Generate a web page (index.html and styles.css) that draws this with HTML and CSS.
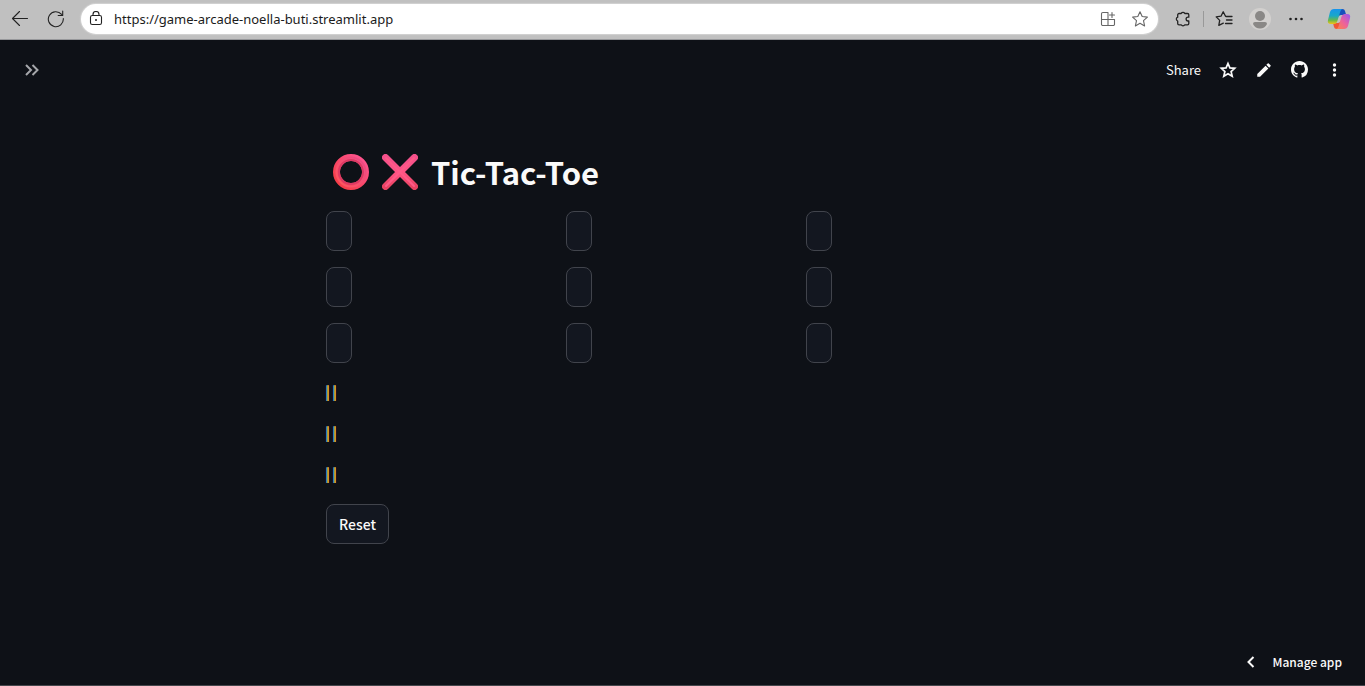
FILE: index.html
```html
<!DOCTYPE html>
<html lang="en">
<head>
<meta charset="utf-8">
<title>Tic-Tac-Toe</title>
<link rel="stylesheet" href="styles.css">
</head>
<body>
<div class="browser">
  <button class="icon-btn nav-btn" aria-label="Back"><svg width="18" height="18" viewBox="0 0 18 18"><path class="thin" d="M16.500 8.500H1.500M8.500 1.500l-7 7 7 7"/></svg></button>
  <button class="icon-btn nav-btn" aria-label="Reload"><svg width="18" height="18" viewBox="0 0 18 18"><path class="thin" d="M16.3 8.5A7.5 7.5 0 1 1 14.6 4.4M15.7 1v4.5h-4.5"/></svg></button>
  <div class="address">
    <svg width="14" height="16" viewBox="0 0 14 16"><rect class="thin" x="1.5" y="4.5" width="11" height="9" rx="1.8"/><path class="thin" d="M4 4.500V3.500a3 3 0 0 1 6 0v1"/><circle cx="7" cy="9" r="1"/></svg>
    <input class="url" type="text" aria-label="Address" value="https://game-arcade-noella-buti.streamlit.app">
    <button class="icon-btn muted" aria-label="Install app"><svg width="16" height="16" viewBox="0 0 16 16"><path class="thin" d="M8 1.5H2.8A1.3 1.3 0 0 0 1.500 2.800V13.200A1.3 1.300 0 0 0 2.800 14.500H13.200A1.300 1.300 0 0 0 14.500 13.200V8.500H1.500M8 1.500V14.500M12 1.500V6.500M9.500 4H14.500"/></svg></button>
    <button class="icon-btn muted" aria-label="Add favorite"><svg width="18" height="18" viewBox="0 0 18 18"><path class="thin" d="M9 1.700l2.200 4.800 5.200.6-3.900 3.600 1.100 5.200L9 13.300l-4.600 2.600 1.100-5.200L1.600 7.100l5.200-.6z"/></svg></button>
  </div>
  <div class="tools">
    <button class="icon-btn" aria-label="Extensions"><svg width="18" height="18" viewBox="0 0 18 18"><path class="tool" d="M5 3.500H7.200a2 2 0 0 1 3.600 0H13.500a1.300 1.300 0 0 1 1.300 1.300V7.200h-.8a1.900 1.900 0 0 0 0 3.800h.8v2.500a1.300 1.300 0 0 1-1.300 1.300H10.800a2 2 0 0 1-3.600 0H5a1.300 1.300 0 0 1-1.300-1.300V11a2 2 0 0 1 0-3.800V4.800A1.300 1.300 0 0 1 5 3.500z"/></svg></button>
    <span class="divider"></span>
    <button class="icon-btn" aria-label="Favorites"><svg width="18" height="18" viewBox="0 0 18 18"><path class="tool" d="M10.500 6.200L8.200 1.800 6 6.200l-4.800.7 3.500 3.500-.9 5 4.500-2.300M11 6.500h6M11.500 10h5.500M10.500 13.500h6.500"/></svg></button>
    <button class="icon-btn avatar" aria-label="Profile"><svg width="22" height="22" viewBox="0 0 22 22"><circle cx="11" cy="11" r="11" fill="#d2d0ce"/><circle cx="11" cy="8" r="5" fill="#8a8886"/><path d="M4 16q0-2 2-2h10q2 0 2 2c-1.500 3-4 4.500-7 4.500S5.500 19 4 16z" fill="#8a8886"/></svg></button>
    <button class="icon-btn more" aria-label="Settings and more"><svg width="16" height="16" viewBox="0 0 16 16"><circle cx="2.500" cy="8" r="1.300"/><circle cx="8" cy="8" r="1.300"/><circle cx="13.500" cy="8" r="1.300"/></svg></button>
    <button class="icon-btn" aria-label="Copilot"><svg width="24" height="22" viewBox="0 0 24 22">
      <defs>
        <linearGradient id="cool" x1="0" y1="0" x2="0" y2="1"><stop offset="0" stop-color="#1794ed"/><stop offset=".45" stop-color="#19a8c8"/><stop offset=".75" stop-color="#68b84a"/><stop offset="1" stop-color="#f4c318"/></linearGradient>
        <linearGradient id="warm" x1="1" y1="0" x2="0" y2="1"><stop offset="0" stop-color="#9657f2"/><stop offset=".5" stop-color="#ed629b"/><stop offset="1" stop-color="#ff873f"/></linearGradient>
      </defs>
      <path d="M12 1h3.500q2 0 2.500 2l1.200 4H14q-2 0-2.500 2z" fill="#174fbc"/>
      <path d="M12 21H9.500q-2 0-2.500-2L6 15h5q2 0 2.500-2z" fill="#ef5635"/>
      <path d="M7 1h9q-2 0-2.500 2l-3.300 10.500Q9.500 16 7 16H4q-4 0-3-4L3 4q1-3 4-3z" fill="url(#cool)"/>
      <path d="M17 21H8.500q2.200 0 3-2.500l3-10Q15.300 6 17.500 6H20q4 0 3 4l-2 8q-1 3-4 3z" fill="url(#warm)"/>
    </svg></button>
  </div>
</div>

<div class="app">
  <header class="toolbar">
    <button class="icon-btn expand" aria-label="Open sidebar"><svg width="16" height="14" viewBox="0 0 16 14"><path d="M2 2l5 5-5 5M8.500 2l5 5-5 5"/></svg></button>
    <div class="actions">
      <button class="share">Share</button>
      <button class="icon-btn" aria-label="Star"><svg width="18" height="18" viewBox="0 0 18 18"><path class="outline" d="M9 2.500l1.900 4.400 4.800.4-3.600 3.200 1.100 4.700L9 12.700l-4.200 2.500 1.100-4.700-3.600-3.200 4.800-.4z"/></svg></button>
      <button class="icon-btn" aria-label="Edit"><svg width="18" height="18" viewBox="0 0 24 24"><path d="M3 17.250V21h3.750L17.810 9.940l-3.750-3.750L3 17.250zM20.710 7.040a1 1 0 0 0 0-1.410l-2.340-2.340a1 1 0 0 0-1.410 0l-1.830 1.830 3.750 3.750 1.830-1.830z"/></svg></button>
      <button class="icon-btn" aria-label="View on GitHub"><svg width="17" height="17" viewBox="0 0 16 16"><path d="M8 0C3.580 0 0 3.580 0 8c0 3.540 2.290 6.530 5.470 7.590.4.070.55-.17.55-.38 0-.19-.01-.82-.01-1.490-2.010.37-2.530-.49-2.690-.94-.09-.23-.48-.94-.82-1.130-.28-.15-.68-.52-.01-.53.63-.01 1.080.58 1.230.82.72 1.210 1.870.87 2.330.66.07-.52.28-.87.51-1.070-1.780-.2-3.640-.89-3.640-3.950 0-.87.31-1.590.82-2.150-.08-.2-.36-1.020.08-2.120 0 0 .67-.21 2.200.82.64-.18 1.320-.27 2-.27s1.360.09 2 .27c1.530-1.040 2.200-.82 2.200-.82.44 1.100.16 1.920.08 2.120.51.56.82 1.270.82 2.150 0 3.070-1.870 3.750-3.650 3.950.29.25.54.73.54 1.480 0 1.070-.01 1.930-.01 2.200 0 .21.15.46.55.38A8 8 0 0 0 16 8c0-4.420-3.580-8-8-8z"/></svg></button>
      <button class="icon-btn" aria-label="Menu"><svg width="17" height="18" viewBox="0 0 17 18"><circle cx="8.500" cy="4" r="1.700"/><circle cx="8.500" cy="9" r="1.700"/><circle cx="8.500" cy="14" r="1.700"/></svg></button>
    </div>
  </header>

  <main class="content">
    <h1 class="title">
      <svg width="36" height="36" viewBox="0 0 36 36" role="img" aria-label="Circle">
        <defs><linearGradient id="ring" x1="1" y1="0" x2="0" y2="1"><stop offset="0" stop-color="#ff5593"/><stop offset="1" stop-color="#f53b42"/></linearGradient><linearGradient id="ringin" x1="1" y1="0" x2="0" y2="1"><stop offset="0" stop-color="#e94888"/><stop offset="1" stop-color="#ff575d"/></linearGradient></defs>
        <circle cx="18" cy="18" r="14.500" fill="none" stroke="url(#ring)" stroke-width="7"/><circle cx="18" cy="18" r="12" fill="none" stroke="#dc3a64" stroke-width="2"/><circle cx="18" cy="18" r="14.500" fill="none" stroke="url(#ringin)" stroke-width="2"/>
      </svg>
      <svg width="36" height="36" viewBox="0 0 36 36" role="img" aria-label="Cross">
        <defs><linearGradient id="cross" x1="0" y1="0" x2="0" y2="1"><stop offset="0" stop-color="#f4508b"/><stop offset=".5" stop-color="#ff5585"/><stop offset="1" stop-color="#ea4362"/></linearGradient></defs>
        <path d="M3.500 3.500l29 29M32.500 3.500l-29 29" stroke="url(#cross)" stroke-width="7" stroke-linecap="round"/><path d="M4 4l28 28M32 4L4 32" stroke="#ff5a88" stroke-width="2" stroke-linecap="round"/>
      </svg>
      <span>Tic-Tac-Toe</span>
    </h1>
    <div class="board">
      <button class="cell" aria-label="Row 1, column 1"></button><button class="cell" aria-label="Row 1, column 2"></button><button class="cell" aria-label="Row 1, column 3"></button>
      <button class="cell" aria-label="Row 2, column 1"></button><button class="cell" aria-label="Row 2, column 2"></button><button class="cell" aria-label="Row 2, column 3"></button>
      <button class="cell" aria-label="Row 3, column 1"></button><button class="cell" aria-label="Row 3, column 2"></button><button class="cell" aria-label="Row 3, column 3"></button>
    </div>
    <div class="moves">
      <p class="row-text">| |</p>
      <p class="row-text">| |</p>
      <p class="row-text">| |</p>
    </div>
    <button class="reset">Reset</button>
  </main>

  <footer class="footer">
    <button class="manage"><svg width="8" height="12" viewBox="0 0 8 12"><path d="M6.500 1L1.500 6l5 5"/></svg>Manage app</button>
  </footer>
</div>
</body>
</html>
```
FILE: styles.css
```css
* { box-sizing: border-box; }
body {
  margin: 0;
  min-height: 100vh;
  display: flex;
  flex-direction: column;
  background: #0e1117;
  color: #fafafa;
  font-family: "Noto Sans CJK SC", "Noto Sans", sans-serif;
}
button {
  margin: 0;
  padding: 0;
  border: 0;
  background: none;
  color: inherit;
  font: inherit;
  cursor: pointer;
}
svg { display: block; flex: none; fill: currentColor; }
.icon-btn { display: flex; align-items: center; justify-content: center; }
.thin, .tool, .outline {
  fill: none;
  stroke: currentColor;
  stroke-linejoin: round;
  stroke-linecap: round;
}
.thin { stroke-width: 1.1; }
.tool { stroke-width: 1.3; }
.outline { stroke-width: 1.7; stroke-linejoin: miter; }

.browser {
  display: flex;
  align-items: center;
  height: 40px;
  padding: 0 14px 2px 11px;
  background: #c0c0c0;
  border-bottom: 1px solid #96979a;
  color: #222;
}
.nav-btn { width: 18px; margin-right: 18px; }
.address {
  flex: 1;
  display: flex;
  align-items: center;
  height: 30px;
  margin-left: -2px;
  padding: 0 9px 0 8px;
  border-radius: 15px;
  background: #fff;
  box-shadow: 0 0 1px 1px #d2d2d2;
}
.url {
  flex: 1;
  min-width: 0;
  margin-left: 11px;
  padding: 0;
  border: 0;
  outline: 0;
  background: none;
  color: #1b1b1b;
  font: 13px "Noto Sans", "Open Sans", sans-serif;
}
.muted { margin-left: 15px; color: #666; }
.tools { display: flex; align-items: center; margin-left: 16px; }
.divider { width: 1px; height: 16px; margin: 0 11px; background: #999; }
.avatar { margin-left: 16px; }
.more { margin: 0 23px 0 17px; }

.app { flex: 1; display: flex; flex-direction: column; border-bottom: 1px solid #45474c; }
.toolbar {
  display: flex;
  align-items: center;
  justify-content: space-between;
  height: 59px;
  padding: 0 22px 0 24px;
}
.expand { color: #a5a7ab; }
.expand path, .manage path { fill: none; stroke: currentColor; stroke-width: 2; }
.actions { display: flex; align-items: center; gap: 18px; }
.share { font-size: 13px; line-height: 20px; }

.content {
  width: 100%;
  max-width: 713px;
  margin: 0 auto;
  padding: 50px 9px 0 0;
}
.title {
  display: flex;
  align-items: center;
  gap: 13px;
  height: 45px;
  margin: 0 0 17px;
  padding-left: 7px;
  font-size: 31px;
  font-weight: 700;
  line-height: 45px;
}
.board { display: grid; grid-template-columns: repeat(3, 1fr); gap: 16px; margin-bottom: 16px; }
.cell, .reset {
  height: 40px;
  border: 1px solid #41444c;
  border-radius: 8px;
  background: #131720;
}
.cell { width: 26px; }
.moves { display: flex; flex-direction: column; gap: 17px; margin-bottom: 19px; }
.row-text {
  margin: 0;
  color: #dca83c;
  font-size: 14px;
  font-weight: 500;
  line-height: 24px;
  text-shadow: 0 0 0 #dca83c, -1px 0 #70b4e8;
}
.reset { padding: 0 12px; font-size: 14px; font-weight: 500; }
.footer { display: flex; justify-content: flex-end; margin-top: auto; padding: 0 23px 13px 0; }
.manage {
  display: flex;
  align-items: center;
  gap: 18px;
  font-size: 12px;
  font-weight: 500;
  line-height: 20px;
}
```
